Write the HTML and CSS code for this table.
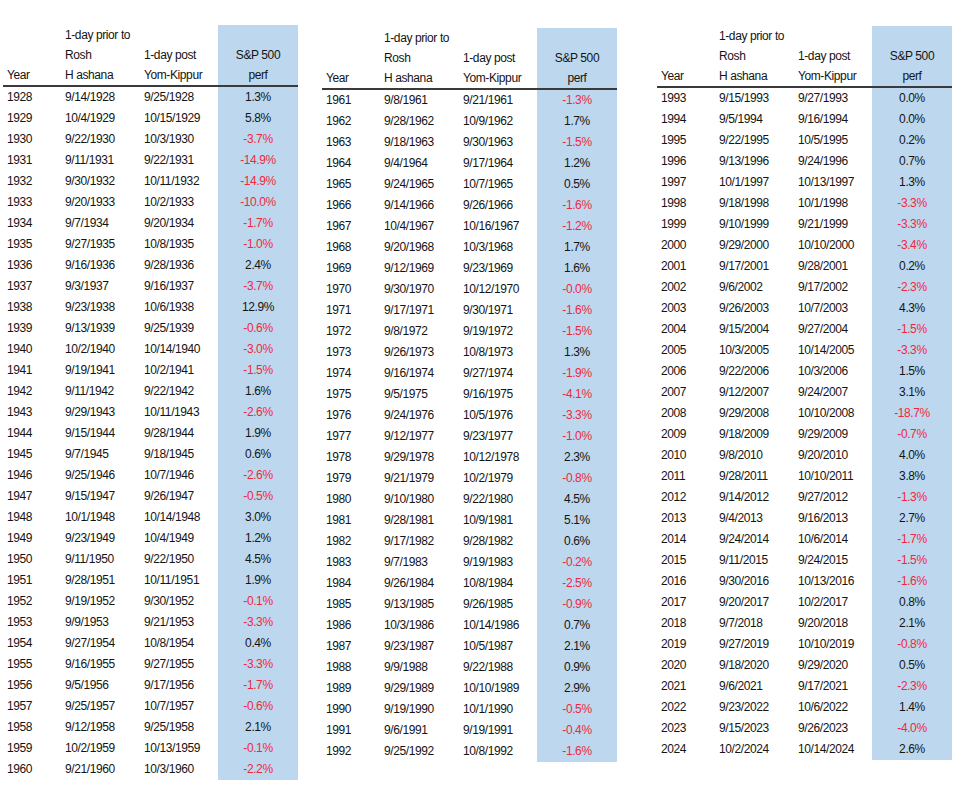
FILE: index.html
```html
<!DOCTYPE html>
<html lang="en">
<head>
<meta charset="utf-8">
<title>S&amp;P 500 between Rosh Hashana and Yom Kippur</title>
<link rel="stylesheet" href="styles.css">
</head>
<body>
<main class="page">

<table class="panel panel-1">
  <colgroup><col class="c-year"><col class="c-prior"><col class="c-post"><col class="c-perf"></colgroup>
  <thead>
    <tr>
      <th>Year</th>
      <th>1-day prior to<br>Rosh<br>H ashana</th>
      <th>1-day post<br>Yom-Kippur</th>
      <th class="perf">S&amp;P 500<br>perf</th>
    </tr>
  </thead>
  <tbody>
    <tr><td>1928</td><td>9/14/1928</td><td>9/25/1928</td><td class="perf">1.3%</td></tr>
    <tr><td>1929</td><td>10/4/1929</td><td>10/15/1929</td><td class="perf">5.8%</td></tr>
    <tr><td>1930</td><td>9/22/1930</td><td>10/3/1930</td><td class="perf neg">-3.7%</td></tr>
    <tr><td>1931</td><td>9/11/1931</td><td>9/22/1931</td><td class="perf neg">-14.9%</td></tr>
    <tr><td>1932</td><td>9/30/1932</td><td>10/11/1932</td><td class="perf neg">-14.9%</td></tr>
    <tr><td>1933</td><td>9/20/1933</td><td>10/2/1933</td><td class="perf neg">-10.0%</td></tr>
    <tr><td>1934</td><td>9/7/1934</td><td>9/20/1934</td><td class="perf neg">-1.7%</td></tr>
    <tr><td>1935</td><td>9/27/1935</td><td>10/8/1935</td><td class="perf neg">-1.0%</td></tr>
    <tr><td>1936</td><td>9/16/1936</td><td>9/28/1936</td><td class="perf">2.4%</td></tr>
    <tr><td>1937</td><td>9/3/1937</td><td>9/16/1937</td><td class="perf neg">-3.7%</td></tr>
    <tr><td>1938</td><td>9/23/1938</td><td>10/6/1938</td><td class="perf">12.9%</td></tr>
    <tr><td>1939</td><td>9/13/1939</td><td>9/25/1939</td><td class="perf neg">-0.6%</td></tr>
    <tr><td>1940</td><td>10/2/1940</td><td>10/14/1940</td><td class="perf neg">-3.0%</td></tr>
    <tr><td>1941</td><td>9/19/1941</td><td>10/2/1941</td><td class="perf neg">-1.5%</td></tr>
    <tr><td>1942</td><td>9/11/1942</td><td>9/22/1942</td><td class="perf">1.6%</td></tr>
    <tr><td>1943</td><td>9/29/1943</td><td>10/11/1943</td><td class="perf neg">-2.6%</td></tr>
    <tr><td>1944</td><td>9/15/1944</td><td>9/28/1944</td><td class="perf">1.9%</td></tr>
    <tr><td>1945</td><td>9/7/1945</td><td>9/18/1945</td><td class="perf">0.6%</td></tr>
    <tr><td>1946</td><td>9/25/1946</td><td>10/7/1946</td><td class="perf neg">-2.6%</td></tr>
    <tr><td>1947</td><td>9/15/1947</td><td>9/26/1947</td><td class="perf neg">-0.5%</td></tr>
    <tr><td>1948</td><td>10/1/1948</td><td>10/14/1948</td><td class="perf">3.0%</td></tr>
    <tr><td>1949</td><td>9/23/1949</td><td>10/4/1949</td><td class="perf">1.2%</td></tr>
    <tr><td>1950</td><td>9/11/1950</td><td>9/22/1950</td><td class="perf">4.5%</td></tr>
    <tr><td>1951</td><td>9/28/1951</td><td>10/11/1951</td><td class="perf">1.9%</td></tr>
    <tr><td>1952</td><td>9/19/1952</td><td>9/30/1952</td><td class="perf neg">-0.1%</td></tr>
    <tr><td>1953</td><td>9/9/1953</td><td>9/21/1953</td><td class="perf neg">-3.3%</td></tr>
    <tr><td>1954</td><td>9/27/1954</td><td>10/8/1954</td><td class="perf">0.4%</td></tr>
    <tr><td>1955</td><td>9/16/1955</td><td>9/27/1955</td><td class="perf neg">-3.3%</td></tr>
    <tr><td>1956</td><td>9/5/1956</td><td>9/17/1956</td><td class="perf neg">-1.7%</td></tr>
    <tr><td>1957</td><td>9/25/1957</td><td>10/7/1957</td><td class="perf neg">-0.6%</td></tr>
    <tr><td>1958</td><td>9/12/1958</td><td>9/25/1958</td><td class="perf">2.1%</td></tr>
    <tr><td>1959</td><td>10/2/1959</td><td>10/13/1959</td><td class="perf neg">-0.1%</td></tr>
    <tr><td>1960</td><td>9/21/1960</td><td>10/3/1960</td><td class="perf neg">-2.2%</td></tr>
  </tbody>
</table>

<table class="panel panel-2">
  <colgroup><col class="c-year"><col class="c-prior"><col class="c-post"><col class="c-perf"></colgroup>
  <thead>
    <tr>
      <th>Year</th>
      <th>1-day prior to<br>Rosh<br>H ashana</th>
      <th>1-day post<br>Yom-Kippur</th>
      <th class="perf">S&amp;P 500<br>perf</th>
    </tr>
  </thead>
  <tbody>
    <tr><td>1961</td><td>9/8/1961</td><td>9/21/1961</td><td class="perf neg">-1.3%</td></tr>
    <tr><td>1962</td><td>9/28/1962</td><td>10/9/1962</td><td class="perf">1.7%</td></tr>
    <tr><td>1963</td><td>9/18/1963</td><td>9/30/1963</td><td class="perf neg">-1.5%</td></tr>
    <tr><td>1964</td><td>9/4/1964</td><td>9/17/1964</td><td class="perf">1.2%</td></tr>
    <tr><td>1965</td><td>9/24/1965</td><td>10/7/1965</td><td class="perf">0.5%</td></tr>
    <tr><td>1966</td><td>9/14/1966</td><td>9/26/1966</td><td class="perf neg">-1.6%</td></tr>
    <tr><td>1967</td><td>10/4/1967</td><td>10/16/1967</td><td class="perf neg">-1.2%</td></tr>
    <tr><td>1968</td><td>9/20/1968</td><td>10/3/1968</td><td class="perf">1.7%</td></tr>
    <tr><td>1969</td><td>9/12/1969</td><td>9/23/1969</td><td class="perf">1.6%</td></tr>
    <tr><td>1970</td><td>9/30/1970</td><td>10/12/1970</td><td class="perf neg">-0.0%</td></tr>
    <tr><td>1971</td><td>9/17/1971</td><td>9/30/1971</td><td class="perf neg">-1.6%</td></tr>
    <tr><td>1972</td><td>9/8/1972</td><td>9/19/1972</td><td class="perf neg">-1.5%</td></tr>
    <tr><td>1973</td><td>9/26/1973</td><td>10/8/1973</td><td class="perf">1.3%</td></tr>
    <tr><td>1974</td><td>9/16/1974</td><td>9/27/1974</td><td class="perf neg">-1.9%</td></tr>
    <tr><td>1975</td><td>9/5/1975</td><td>9/16/1975</td><td class="perf neg">-4.1%</td></tr>
    <tr><td>1976</td><td>9/24/1976</td><td>10/5/1976</td><td class="perf neg">-3.3%</td></tr>
    <tr><td>1977</td><td>9/12/1977</td><td>9/23/1977</td><td class="perf neg">-1.0%</td></tr>
    <tr><td>1978</td><td>9/29/1978</td><td>10/12/1978</td><td class="perf">2.3%</td></tr>
    <tr><td>1979</td><td>9/21/1979</td><td>10/2/1979</td><td class="perf neg">-0.8%</td></tr>
    <tr><td>1980</td><td>9/10/1980</td><td>9/22/1980</td><td class="perf">4.5%</td></tr>
    <tr><td>1981</td><td>9/28/1981</td><td>10/9/1981</td><td class="perf">5.1%</td></tr>
    <tr><td>1982</td><td>9/17/1982</td><td>9/28/1982</td><td class="perf">0.6%</td></tr>
    <tr><td>1983</td><td>9/7/1983</td><td>9/19/1983</td><td class="perf neg">-0.2%</td></tr>
    <tr><td>1984</td><td>9/26/1984</td><td>10/8/1984</td><td class="perf neg">-2.5%</td></tr>
    <tr><td>1985</td><td>9/13/1985</td><td>9/26/1985</td><td class="perf neg">-0.9%</td></tr>
    <tr><td>1986</td><td>10/3/1986</td><td>10/14/1986</td><td class="perf">0.7%</td></tr>
    <tr><td>1987</td><td>9/23/1987</td><td>10/5/1987</td><td class="perf">2.1%</td></tr>
    <tr><td>1988</td><td>9/9/1988</td><td>9/22/1988</td><td class="perf">0.9%</td></tr>
    <tr><td>1989</td><td>9/29/1989</td><td>10/10/1989</td><td class="perf">2.9%</td></tr>
    <tr><td>1990</td><td>9/19/1990</td><td>10/1/1990</td><td class="perf neg">-0.5%</td></tr>
    <tr><td>1991</td><td>9/6/1991</td><td>9/19/1991</td><td class="perf neg">-0.4%</td></tr>
    <tr><td>1992</td><td>9/25/1992</td><td>10/8/1992</td><td class="perf neg">-1.6%</td></tr>
  </tbody>
</table>

<table class="panel panel-3">
  <colgroup><col class="c-year"><col class="c-prior"><col class="c-post"><col class="c-perf"></colgroup>
  <thead>
    <tr>
      <th>Year</th>
      <th>1-day prior to<br>Rosh<br>H ashana</th>
      <th>1-day post<br>Yom-Kippur</th>
      <th class="perf">S&amp;P 500<br>perf</th>
    </tr>
  </thead>
  <tbody>
    <tr><td>1993</td><td>9/15/1993</td><td>9/27/1993</td><td class="perf">0.0%</td></tr>
    <tr><td>1994</td><td>9/5/1994</td><td>9/16/1994</td><td class="perf">0.0%</td></tr>
    <tr><td>1995</td><td>9/22/1995</td><td>10/5/1995</td><td class="perf">0.2%</td></tr>
    <tr><td>1996</td><td>9/13/1996</td><td>9/24/1996</td><td class="perf">0.7%</td></tr>
    <tr><td>1997</td><td>10/1/1997</td><td>10/13/1997</td><td class="perf">1.3%</td></tr>
    <tr><td>1998</td><td>9/18/1998</td><td>10/1/1998</td><td class="perf neg">-3.3%</td></tr>
    <tr><td>1999</td><td>9/10/1999</td><td>9/21/1999</td><td class="perf neg">-3.3%</td></tr>
    <tr><td>2000</td><td>9/29/2000</td><td>10/10/2000</td><td class="perf neg">-3.4%</td></tr>
    <tr><td>2001</td><td>9/17/2001</td><td>9/28/2001</td><td class="perf">0.2%</td></tr>
    <tr><td>2002</td><td>9/6/2002</td><td>9/17/2002</td><td class="perf neg">-2.3%</td></tr>
    <tr><td>2003</td><td>9/26/2003</td><td>10/7/2003</td><td class="perf">4.3%</td></tr>
    <tr><td>2004</td><td>9/15/2004</td><td>9/27/2004</td><td class="perf neg">-1.5%</td></tr>
    <tr><td>2005</td><td>10/3/2005</td><td>10/14/2005</td><td class="perf neg">-3.3%</td></tr>
    <tr><td>2006</td><td>9/22/2006</td><td>10/3/2006</td><td class="perf">1.5%</td></tr>
    <tr><td>2007</td><td>9/12/2007</td><td>9/24/2007</td><td class="perf">3.1%</td></tr>
    <tr><td>2008</td><td>9/29/2008</td><td>10/10/2008</td><td class="perf neg">-18.7%</td></tr>
    <tr><td>2009</td><td>9/18/2009</td><td>9/29/2009</td><td class="perf neg">-0.7%</td></tr>
    <tr><td>2010</td><td>9/8/2010</td><td>9/20/2010</td><td class="perf">4.0%</td></tr>
    <tr><td>2011</td><td>9/28/2011</td><td>10/10/2011</td><td class="perf">3.8%</td></tr>
    <tr><td>2012</td><td>9/14/2012</td><td>9/27/2012</td><td class="perf neg">-1.3%</td></tr>
    <tr><td>2013</td><td>9/4/2013</td><td>9/16/2013</td><td class="perf">2.7%</td></tr>
    <tr><td>2014</td><td>9/24/2014</td><td>10/6/2014</td><td class="perf neg">-1.7%</td></tr>
    <tr><td>2015</td><td>9/11/2015</td><td>9/24/2015</td><td class="perf neg">-1.5%</td></tr>
    <tr><td>2016</td><td>9/30/2016</td><td>10/13/2016</td><td class="perf neg">-1.6%</td></tr>
    <tr><td>2017</td><td>9/20/2017</td><td>10/2/2017</td><td class="perf">0.8%</td></tr>
    <tr><td>2018</td><td>9/7/2018</td><td>9/20/2018</td><td class="perf">2.1%</td></tr>
    <tr><td>2019</td><td>9/27/2019</td><td>10/10/2019</td><td class="perf neg">-0.8%</td></tr>
    <tr><td>2020</td><td>9/18/2020</td><td>9/29/2020</td><td class="perf">0.5%</td></tr>
    <tr><td>2021</td><td>9/6/2021</td><td>9/17/2021</td><td class="perf neg">-2.3%</td></tr>
    <tr><td>2022</td><td>9/23/2022</td><td>10/6/2022</td><td class="perf">1.4%</td></tr>
    <tr><td>2023</td><td>9/15/2023</td><td>9/26/2023</td><td class="perf neg">-4.0%</td></tr>
    <tr><td>2024</td><td>10/2/2024</td><td>10/14/2024</td><td class="perf">2.6%</td></tr>
  </tbody>
</table>

</main>
</body>
</html>
```

FILE: styles.css
```css
html, body {
  margin: 0;
  padding: 0;
  background: #ffffff;
}

body {
  font-family: "Liberation Sans", Arial, sans-serif;
  font-size: 12px;
  letter-spacing: -0.4px;
  color: #141414;
}

.page {
  display: flex;
  align-items: flex-start;
  width: 958px;
  height: 795px;
  overflow: hidden;
}

.panel {
  border-collapse: collapse;
  border-spacing: 0;
  table-layout: fixed;
  width: 295px;
}

.panel-1 { margin: 25px 0 0 3px; }
.panel-2 { margin: 28px 0 0 24px; }
.panel-3 { margin: 26px 0 0 40px; }

.c-year  { width: 58px; }
.c-prior { width: 79px; }
.c-post  { width: 78px; }
.c-perf  { width: 80px; }

.panel th,
.panel td {
  padding: 0 0 0 4px;
  text-align: left;
  white-space: nowrap;
  font-weight: normal;
}

.panel th {
  height: 60px;
  line-height: 20px;
  vertical-align: bottom;
  border-bottom: 2px solid #3a3a3a;
  padding-bottom: 0;
}

.panel td {
  height: 21px;
  line-height: 21px;
  vertical-align: middle;
}

.panel .perf {
  background: #bdd7ee;
  text-align: center;
  padding: 0;
}

.panel .neg {
  color: #f0283c;
}
```
